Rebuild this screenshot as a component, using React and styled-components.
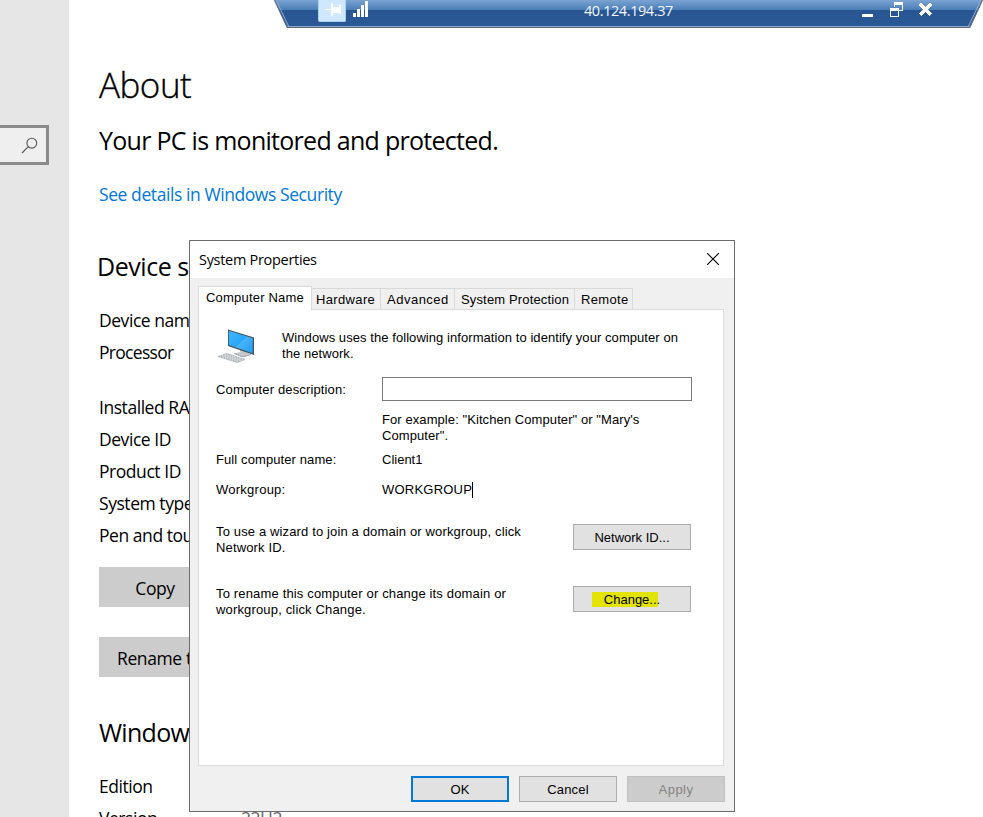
import React from 'react';
import styled, { createGlobalStyle, css } from 'styled-components';

const GlobalStyle = createGlobalStyle`
  *, *::before, *::after { box-sizing: border-box; }
  body { margin: 0; background: #fff; overflow: hidden; }
`;

const segoe = css`font-family: "Open Sans", "Noto Sans", sans-serif;`;

const Desktop = styled.div`
  position: relative;
  display: flex;
  width: 983px;
  height: 817px;
  overflow: hidden;
  background: #fff;
  color: #000;
  ${segoe}
`;

/* Settings window */
const Sidebar = styled.aside`
  flex: none;
  width: 69px;
  padding-top: 125px;
  background: #e6e6e6;
`;

const SearchBox = styled.div`
  display: flex;
  align-items: center;
  justify-content: flex-end;
  width: 49px;
  height: 40px;
  padding-right: 8px;
  border: 3px solid #8a8a8a;
  border-left: 0;
  background: #efefef;
`;

const Main = styled.main`
  flex: 1;
  padding: 61px 0 0 30px;
`;

const Title = styled.h1`
  margin: 0 0 15px;
  font-size: 35px;
  font-weight: 300;
  line-height: 48px;
  letter-spacing: -0.5px;
  -webkit-text-stroke: 0.35px #000;
`;

const Heading = styled.h2`
  margin: ${p => p.$top || 0}px 0 22px ${p => p.$shift || 0}px;
  font-size: 25px;
  font-weight: 400;
  line-height: 32px;
  letter-spacing: ${p => p.$spacing || -0.72}px;
  white-space: nowrap;
`;

const SecurityLink = styled.a`
  display: block;
  color: #0078d7;
  font-size: 17.5px;
  line-height: 32px;
  letter-spacing: -0.42px;
`;

const SpecRow = styled.div`
  display: grid;
  grid-template-columns: 142px 1fr;
  height: ${p => (p.$tall ? 55 : 32)}px;
  font-size: 17.5px;
  line-height: 32px;
  letter-spacing: ${p => (p.$tall ? -0.7 : -0.45)}px;
  white-space: nowrap;
`;

const SpecValue = styled.span`
  color: #666;
`;

const SettingsButton = styled.button`
  display: block;
  width: ${p => p.$width}px;
  height: 40px;
  margin: ${p => p.$top}px 0 0;
  padding: 1px 0 0;
  border: 0;
  background: #ccc;
  color: #000;
  ${segoe}
  font-size: 17.5px;
  letter-spacing: -0.4px;
  text-align: center;
`;

/* Remote desktop connection bar, floating over the session */
const ConnectionBar = styled.header`
  position: absolute;
  top: 0;
  left: 274px;
  display: grid;
  grid-template-columns: 44px 28px 23px 1fr 19px 30px 29px 44px;
  align-items: start;
  width: 709px;
  height: 28px;
  clip-path: polygon(0 0, 100% 0, 696px 100%, 13px 100%);
  background: linear-gradient(
    #7ba3d2 0, #4a7eb8 10px, #285692 10px, #2a5896 26px,
    #8cabd2 26px, #8cabd2 27px, #5e646c 27px
  );
`;

const BarEdges = styled.svg`
  position: absolute;
  inset: 0;
`;

const PinButton = styled.div`
  grid-column: 2;
  height: 22px;
  border: 1px solid #a9d3f5;
  border-top: 0;
  border-radius: 0 0 2px 2px;
  background: #d0e8ff;
`;

const BarIcon = styled.svg`
  display: block;
  shape-rendering: crispEdges;
`;

const SignalIcon = styled(BarIcon)`
  margin: 1px 0 0 7px;
`;

const Address = styled.div`
  padding-left: 215px;
  color: #f2f6fb;
  font-size: 14.5px;
  line-height: 21px;
  letter-spacing: -0.42px;
`;

/* System Properties dialog, floating over the settings window */
const Dialog = styled.section`
  position: absolute;
  top: 240px;
  left: 189px;
  display: flex;
  flex-direction: column;
  width: 546px;
  height: 572px;
  border: 1px solid #6c6c6c;
  background: #f0f0f0;
  font-family: "Liberation Sans", Arial, sans-serif;
  font-size: 13px;
  line-height: 16px;
`;

const TitleBar = styled.div`
  display: flex;
  justify-content: space-between;
  align-items: center;
  height: 37px;
  padding: 0 15px 0 9px;
  background: #fff;
  ${segoe}
  font-size: 14.5px;
  letter-spacing: -0.3px;

  svg { margin-bottom: 1px; }
`;

const TabStrip = styled.div`
  display: flex;
  align-items: flex-end;
  height: 31px;
  padding-left: 8px;
`;

const Tab = styled.div`
  width: ${p => p.$width}px;
  height: 21px;
  padding: 3px 0 0 ${p => p.$inset}px;
  border: 1px solid #d9d9d9;
  border-left: 0;
  border-bottom: 0;
  letter-spacing: ${p => p.$spacing || 0}px;
  white-space: nowrap;
  ${p => p.$selected && css`
    position: relative;
    height: 24px;
    margin-bottom: -1px;
    border-left: 1px solid #d9d9d9;
    background: #fff;
  `}
`;

const TabPage = styled.div`
  width: 526px;
  height: 457px;
  margin-left: 8px;
  padding: 20px 31px 0 17px;
  border: 1px solid #dcdcdc;
  background: #fff;
`;

const Intro = styled.div`
  display: grid;
  grid-template-columns: 66px 1fr;
  height: 47px;

  svg { margin: -1px 0 0 1px; }
`;

const Text = styled.p`
  margin: ${p => p.$top || 0}px 0 0;
  letter-spacing: ${p => p.$spacing || 0}px;
  white-space: nowrap;
`;

const Field = styled.div`
  display: grid;
  grid-template-columns: 166px 310px;
  height: ${p => p.$height}px;
`;

const DescriptionInput = styled.input`
  width: 310px;
  height: 24px;
  padding: 0 4px;
  border: 1px solid #7a7a7a;
  background: #fff;
  outline: 0;
`;

const Caret = styled.span`
  display: inline-block;
  width: 1px;
  height: 16px;
  background: #000;
  vertical-align: top;
`;

const ActionRow = styled.div`
  display: flex;
  justify-content: space-between;
  height: 62px;
  padding-right: 1px;
`;

const Button = styled.button`
  width: ${p => p.$width}px;
  height: 26px;
  padding: 1px 0 0;
  border: 1px solid #adadad;
  background: #e1e1e1;
  color: #000;
  font: 13px/16px "Liberation Sans", Arial, sans-serif;
  letter-spacing: ${p => p.$spacing || 0}px;
  ${p => p.$primary && css`border: 2px solid #0078d7;`}
  ${p => p.disabled && css`
    border-color: #bfbfbf;
    background: #ccc;
    color: #838383;
  `}
`;

const Highlight = styled.span`
  display: inline-block;
  margin-left: -12px;
  padding-left: 12px;
  background: linear-gradient(#e3e300, #e3e300) 0 0 / 66px 15px no-repeat;
`;

const Footer = styled.div`
  display: flex;
  justify-content: flex-end;
  gap: 10px;
  padding: 10px 9px 0 0;
`;

function SearchGlyph() {
  return (
    <svg width="17" height="17" viewBox="0 0 17 17" fill="none" stroke="#555" strokeWidth="1.1">
      <circle cx="10.8" cy="6.2" r="4.9" />
      <path d="M7.3 9.7 1 16" />
    </svg>
  );
}

function ComputerIcon() {
  return (
    <svg width="38" height="36" viewBox="0 0 38 36">
      <defs>
        <linearGradient id="screen" x1="0" y1="0" x2="1" y2="1">
          <stop offset="0" stopColor="#3db8ff" />
          <stop offset=".5" stopColor="#2aa6f8" />
          <stop offset=".52" stopColor="#48b4fb" />
          <stop offset="1" stopColor="#219bf2" />
        </linearGradient>
      </defs>
      <path d="M23 20v3l-6 1.5 9 3.5 8-2.5-4-2v-2z" fill="#c3c8cc" />
      <path d="m17 24.5 9 3.5 8-2.5" fill="none" stroke="#8f959a" strokeWidth=".8" />
      <path d="M11 .5 37 8.5v17.5L11 17z" fill="#45505b" />
      <path d="M11.8 1.7 35.7 9.2v15L11.8 16.1z" fill="url(#screen)" />
      <path d="m1 27.5 9-3 18 6-8 3z" fill="#d9dde0" stroke="#9aa1a7" strokeWidth=".8" strokeDasharray="2 .6" />
      <path d="m4 27.3 17 5.6M6.5 26.5l17 5.6M9 25.6l16 5.2" stroke="#a2a8ad" strokeWidth=".8" strokeDasharray="1.6 .9" />
    </svg>
  );
}

const specs = [
  ['Device name'], ['Processor', true], ['Installed RAM'], ['Device ID'],
  ['Product ID'], ['System type'], ['Pen and touch'],
];

const tabs = [
  ['Computer Name', 114, 7, 0.2, true],
  ['Hardware', 69, 4, 0.35],
  ['Advanced', 74, 6, 0.5],
  ['System Protection', 120, 6, 0.15],
  ['Remote', 58, 6, 0.35],
];

export default function App() {
  return (
    <Desktop>
      <GlobalStyle />
      <Sidebar>
        <SearchBox><SearchGlyph /></SearchBox>
      </Sidebar>
      <Main>
        <Title>About</Title>
        <Heading>Your PC is monitored and protected.</Heading>
        <SecurityLink>See details in Windows Security</SecurityLink>
        <Heading $top={40} $shift={-2} $spacing={-0.45}>Device specifications</Heading>
        {specs.map(([label, tall]) => <SpecRow key={label} $tall={tall}>{label}</SpecRow>)}
        <SettingsButton $top={16} $width={112}>Copy</SettingsButton>
        <SettingsButton $top={30} $width={158}>Rename this PC</SettingsButton>
        <Heading $top={39}>Windows specifications</Heading>
        <SpecRow>Edition</SpecRow>
        <SpecRow>Version<SpecValue>22H2</SpecValue></SpecRow>
      </Main>

      <ConnectionBar>
        <BarEdges width="709" height="28" fill="none" strokeWidth="2">
          <path d="M0 0l13 28M709 0l-13 28" stroke="#5e6a7a" />
          <path d="M2 0l13 27M707 0l-13 27" stroke="#8cabd2" strokeWidth="1" />
        </BarEdges>
        <PinButton>
          <BarIcon width="26" height="21" fill="#fff">
            <path d="M6 9h6v1H6zM12 3h2v13h-2zM14 7h7v6h-7zM20 5h2v9h-2z" />
          </BarIcon>
        </PinButton>
        <SignalIcon width="16" height="17" fill="#fff">
          <path d="M0 12h3v4H0zM4 8h3v8H4zM8 4h3v12H8zM12 0h3v16h-3z" />
        </SignalIcon>
        <Address>40.124.194.37</Address>
        <BarIcon width="19" height="22" fill="#fff"><path d="M1 14h11v3H1z" /></BarIcon>
        <BarIcon width="30" height="22" fill="#fff">
          <path fillRule="evenodd" d="M14 2h9v9h-4V10h3V5h-7v2h-1zM10 8h9v9h-9zM11 11v5h7v-5z" />
        </BarIcon>
        <BarIcon width="29" height="22" stroke="#fff" strokeWidth="3">
          <path d="m10 4 11 11M21 4 10 15" />
        </BarIcon>
      </ConnectionBar>

      <Dialog>
        <TitleBar>
          System Properties
          <svg width="12" height="12" stroke="#000" strokeWidth="1.1"><path d="m0 0 12 12M12 0 0 12" /></svg>
        </TitleBar>
        <TabStrip>
          {tabs.map(([label, width, inset, spacing, selected]) => (
            <Tab key={label} $width={width} $inset={inset} $spacing={spacing} $selected={selected}>{label}</Tab>
          ))}
        </TabStrip>
        <TabPage>
          <Intro>
            <ComputerIcon />
            <Text $spacing={0.065}>Windows uses the following information to identify your computer on<br />the network.</Text>
          </Intro>
          <Field $height={35}>
            <Text $top={5} $spacing={0.14}>Computer description:</Text>
            <DescriptionInput aria-label="Computer description" />
          </Field>
          <Field $height={40}>
            <span />
            <Text $spacing={0.08}>For example: "Kitchen Computer" or "Mary's<br />Computer".</Text>
          </Field>
          <Field $height={30}>
            <Text $spacing={0.1}>Full computer name:</Text>
            <Text>Client1</Text>
          </Field>
          <Field $height={42}>
            <Text $spacing={0.25}>Workgroup:</Text>
            <Text $spacing={0.22}>WORKGROUP<Caret /></Text>
          </Field>
          <ActionRow>
            <Text $spacing={0.14}>To use a wizard to join a domain or workgroup, click<br />Network ID.</Text>
            <Button $width={118}>Network ID...</Button>
          </ActionRow>
          <ActionRow>
            <Text $spacing={0.16}>To rename this computer or change its domain or<br />workgroup, click Change.</Text>
            <Button $width={118}><Highlight>Change...</Highlight></Button>
          </ActionRow>
        </TabPage>
        <Footer>
          <Button $width={98} $primary>OK</Button>
          <Button $width={98} $spacing={0.2}>Cancel</Button>
          <Button $width={98} $spacing={0.5} disabled>Apply</Button>
        </Footer>
      </Dialog>
    </Desktop>
  );
}
